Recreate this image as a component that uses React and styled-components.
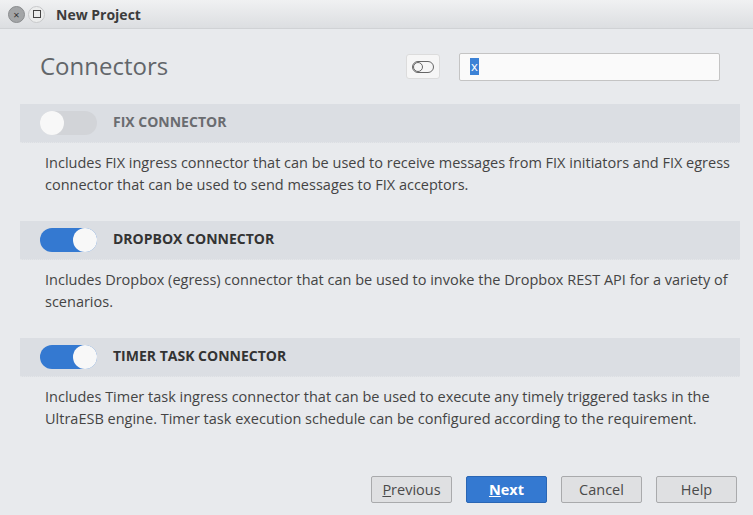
import React from "react";
import styled, { createGlobalStyle } from "styled-components";

const Global = createGlobalStyle`
  html, body { margin: 0; padding: 0; }
  body { width: 753px; height: 515px; overflow: hidden; background: #e8eaed;
    font-family: "Open Sans", "DejaVu Sans", sans-serif; }
`;

const Window = styled.div`
  width: 753px; height: 515px; display: flex; flex-direction: column;
  background: #e8eaed; box-sizing: border-box;
`;

const TitleBar = styled.div`
  height: 29px; flex: none; display: flex; align-items: center; gap: 3px;
  padding-left: 8px; box-sizing: border-box;
  background: linear-gradient(#f0f1f2, #dcdee1);
  border-bottom: 1px solid #d0d2d5;
`;

const WinBtn = styled.div`
  width: 15px; height: 15px; border-radius: 50%;
  display: flex; align-items: center; justify-content: center;
  background: ${p => (p.$close ? "#a3a5a7" : "#eceded")};
  border: 1px solid ${p => (p.$close ? "#8a8c8e" : "#c8c9cb")};
  color: #333; font-size: 11px; line-height: 1;
`;

const Title = styled.div`
  margin-left: 8px; font-weight: 700; font-size: 14px; color: #3c3c3c;
`;

const Body = styled.div`
  flex: 1; display: flex; flex-direction: column; padding: 0 13px 0 20px;
`;

const Header = styled.div`
  height: 75px; flex: none; display: flex; align-items: center; padding: 0 20px;
  box-sizing: border-box;
`;

const Heading = styled.h1`
  margin: 0; flex: 1; font-weight: 400; font-size: 24px; color: #62666a;
  padding-bottom: 2px;
`;

const IconButton = styled.div`
  width: 34px; height: 25px; box-sizing: border-box; border-radius: 3px;
  background: #f6f6f6; border: 1px solid #dcdcdc; display: flex; align-items: center;
  justify-content: center; margin-right: 19px;
`;

const Search = styled.div`
  width: 261px; height: 28px; box-sizing: border-box; background: #fafafa;
  border: 1px solid #c4c4c4; border-radius: 2px; display: flex; align-items: center;
  padding-left: 10px;
`;

const Sel = styled.span`
  background: #3c82d6; color: #fff; font-size: 13px; line-height: 17px; padding: 0 1px;
`;

const List = styled.div`
  display: flex; flex-direction: column;
`;

const Item = styled.div`
  display: flex; flex-direction: column; height: 117px;
`;

const ItemHead = styled.div`
  height: 38px; background: #dbdee3; display: flex; align-items: center;
  padding-left: 20px; gap: 16px; border-bottom: 1px dotted #e4e6e9;
`;

const Toggle = styled.div`
  width: 57px; height: 24px; border-radius: 12px; position: relative;
  background: ${p => (p.$on ? "#3479d1" : "#d2d4d8")};
`;

const Knob = styled.div`
  position: absolute; top: 0; width: 24px; height: 24px; border-radius: 50%;
  background: #f8f8f8; left: ${p => (p.$on ? "33px" : "0")};
`;

const Label = styled.div`
  font-weight: 700; font-size: 14px; color: ${p => (p.$on ? "#333" : "#6a6c70")};
  padding-bottom: 3px;
`;

const Desc = styled.p`
  margin: 0; padding: 9px 0 0 25px; font-size: 14.5px; line-height: 22px; color: #444;
`;

const Footer = styled.div`
  margin-top: auto; display: flex; justify-content: flex-end; gap: 14px;
  padding: 0 3px 12px 0;
`;

const Button = styled.div`
  width: 81px; height: 27px; box-sizing: border-box; display: flex;
  align-items: center; justify-content: center; font-size: 14.5px; border-radius: 2px;
  background: ${p => (p.$primary ? "#3479d1" : "#dfe0e2")};
  border: 1px solid ${p => (p.$primary ? "#2a66b4" : "#a9aaac")};
  color: ${p => (p.$primary ? "#fff" : "#4a4a4a")};
  font-weight: ${p => (p.$primary ? 700 : 400)};
  u { text-decoration: underline; }
`;

const items = [
  { on: false, label: "FIX CONNECTOR", desc: "Includes FIX ingress connector that can be used to receive messages from FIX initiators and FIX egress connector that can be used to send messages to FIX acceptors." },
  { on: true, label: "DROPBOX CONNECTOR", desc: "Includes Dropbox (egress) connector that can be used to invoke the Dropbox REST API for a variety of scenarios." },
  { on: true, label: "TIMER TASK CONNECTOR", desc: "Includes Timer task ingress connector that can be used to execute any timely triggered tasks in the UltraESB engine. Timer task execution schedule can be configured according to the requirement." },
];

export default function App() {
  return (
    <Window>
      <Global />
      <TitleBar>
        <WinBtn $close>×</WinBtn>
        <WinBtn>
          <svg width="8" height="8" viewBox="0 0 8 8"><rect x="0.5" y="0.5" width="7" height="7" fill="none" stroke="#444" /></svg>
        </WinBtn>
        <Title>New Project</Title>
      </TitleBar>
      <Body>
        <Header>
          <Heading>Connectors</Heading>
          <IconButton>
            <svg width="22" height="12" viewBox="0 0 22 12">
              <rect x="0.5" y="0.5" width="21" height="11" rx="5.5" fill="none" stroke="#666" />
              <circle cx="6" cy="6" r="4.5" fill="none" stroke="#666" />
            </svg>
          </IconButton>
          <Search><Sel>x</Sel></Search>
        </Header>
        <List>
          {items.map(it => (
            <Item key={it.label}>
              <ItemHead>
                <Toggle $on={it.on}><Knob $on={it.on} /></Toggle>
                <Label $on={it.on}>{it.label}</Label>
              </ItemHead>
              <Desc>{it.desc}</Desc>
            </Item>
          ))}
        </List>
        <Footer>
          <Button><span><u>P</u>revious</span></Button>
          <Button $primary><span><u>N</u>ext</span></Button>
          <Button>Cancel</Button>
          <Button>Help</Button>
        </Footer>
      </Body>
    </Window>
  );
}
